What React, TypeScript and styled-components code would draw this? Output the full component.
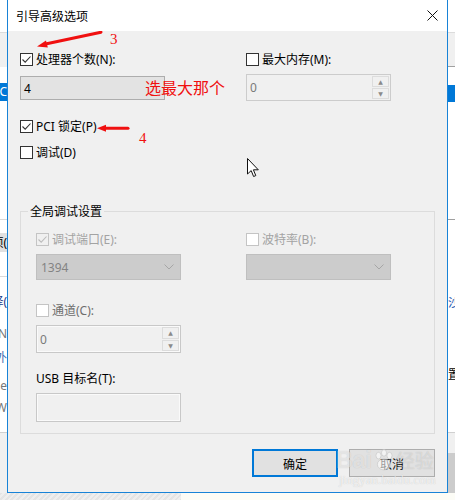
import React from "react";
import styled, { createGlobalStyle } from "styled-components";

const GlobalStyle = createGlobalStyle`
  *, *::before, *::after { box-sizing: border-box; }
  html, body { margin: 0; padding: 0; background: #ffffff; }
  body {
    font-family: "Noto Sans", "Noto Sans CJK SC", sans-serif;
    font-size: 12px;
    color: #000;
  }
`;

interface Band {
  h: number;
  bg?: string;
  line?: string;
  text?: string;
  color?: string;
}

// bits of the window behind the dialog
const leftBands: Band[] = [
  { h: 33, line: "#dcdcdc" },
  { h: 34, bg: "#f0f0f0" },
  { h: 16 },
  { h: 18, bg: "#0078d7", text: "(C", color: "#fff" },
  { h: 119, line: "#d9d9d9" },
  { h: 13 },
  { h: 19, bg: "#e1e1e1", text: "项(" },
  { h: 25, line: "#d9d9d9" },
  { h: 17 },
  { h: 15, text: "择(", color: "#1a3a8a" },
  { h: 17 },
  { h: 15, text: "N", color: "#777" },
  { h: 9 },
  { h: 15, text: "外", color: "#3a6ab0" },
  { h: 13 },
  { h: 15, text: "e", color: "#777" },
  { h: 7 },
  { h: 15, text: "W", color: "#777" },
  { h: 18, line: "#d0d0d0" },
  { h: 60, bg: "#f0f0f0" },
];

const rightBands: Band[] = [
  { h: 33, line: "#dcdcdc" },
  { h: 34, bg: "#f0f0f0", line: "#a0a0a0" },
  { h: 18 },
  { h: 17, bg: "#0078d7" },
  { h: 118, line: "#a0a0a0" },
  { h: 75 },
  { h: 15, text: "沙", color: "#2a5ab0" },
  { h: 58 },
  { h: 14, text: "置" },
  { h: 51, line: "#d0d0d0" },
  { h: 20, bg: "#f0f0f0" },
  { h: 40, bg: "#cccccc" },
];

const CheckMark = ({ color }: { color: string }) => (
  <svg width="11" height="11" viewBox="0 0 11 11">
    <path d="M1.5 5.5 L4.2 8.2 L9.5 2.5" fill="none" stroke={color} strokeWidth="1.1" />
  </svg>
);

const Check = ({
  checked,
  tone = "normal",
}: {
  checked?: boolean;
  tone?: "normal" | "dim" | "white";
}) => (
  <Box $tone={tone}>
    {checked && <CheckMark color={tone === "dim" ? "#bcbcbc" : "#333"} />}
  </Box>
);

const SpinButtons = () => (
  <SpinCol>
    <SpinBtn>▲</SpinBtn>
    <SpinBtn>▼</SpinBtn>
  </SpinCol>
);

const Chevron = () => (
  <svg width="10" height="6" viewBox="0 0 10 6">
    <path d="M0.5 0.5 L5 5 L9.5 0.5" fill="none" stroke="#a6a6a6" strokeWidth="1" />
  </svg>
);

const App: React.FC = () => {
  return (
    <>
      <GlobalStyle />
      <Screen>
        <Middle>
          <Side>
            {leftBands.map((b, i) => (
              <SideBand key={i} $h={b.h} $bg={b.bg} $line={b.line} $color={b.color} $end>
                {b.text}
              </SideBand>
            ))}
          </Side>

          <Dialog>
            <TitleBar>
              <Title>引导高级选项</Title>
              <CloseIcon width="11" height="11" viewBox="0 0 11 11">
                <path d="M0.5 0.5 L10.5 10.5 M10.5 0.5 L0.5 10.5" stroke="#111" strokeWidth="1" />
              </CloseIcon>
            </TitleBar>

            <Body>
              <TwoCol $left={226}>
                <Column $gap={10}>
                  <CheckRow>
                    <Check checked />
                    <Label>处理器个数(N):</Label>
                  </CheckRow>
                  <Field $h={24} $bg="#e3e3e3" $border="#adadad">
                    4
                  </Field>
                </Column>
                <Column $gap={8}>
                  <CheckRow>
                    <Check />
                    <Label>最大内存(M):</Label>
                  </CheckRow>
                  <Field $h={27} $bg="#f0f0f0" $border="#cccccc" $color="#7a7a7a">
                    0
                    <SpinButtons />
                  </Field>
                </Column>
              </TwoCol>

              <CheckRow $mt={19}>
                <Check checked />
                <Label>PCI 锁定(P)</Label>
              </CheckRow>
              <CheckRow $mt={13}>
                <Check />
                <Label>调试(D)</Label>
              </CheckRow>

              <Group>
                <Legend>全局调试设置</Legend>
                <TwoCol $left={210}>
                  <Column $gap={8}>
                    <CheckRow>
                      <Check checked tone="dim" />
                      <Label $dim>调试端口(E):</Label>
                    </CheckRow>
                    <Combo>
                      1394
                      <Chevron />
                    </Combo>
                  </Column>
                  <Column $gap={8}>
                    <CheckRow>
                      <Check tone="white" />
                      <Label $dim>波特率(B):</Label>
                    </CheckRow>
                    <Combo>
                      <span />
                      <Chevron />
                    </Combo>
                  </Column>
                </TwoCol>

                <CheckRow $mt={24}>
                  <Check tone="white" />
                  <Label $color="#6d6d6d">通道(C):</Label>
                </CheckRow>
                <Field $h={28} $bg="#f0f0f0" $border="#c8c8c8" $color="#7a7a7a" $mt={8} $inner>
                  0
                  <SpinButtons />
                </Field>

                <PlainLabel>USB 目标名(T):</PlainLabel>
                <Field $h={29} $bg="#f0f0f0" $border="#c8c8c8" $mt={7} $inner />
              </Group>

              <Buttons>
                <Button $primary>确定</Button>
                <Button>取消</Button>
              </Buttons>

              {/* annotations drawn on top of the screenshot */}
              <Marks width="439" height="461" viewBox="0 0 439 461">
                <path d="M37.5 13 L93 1.2" stroke="#f01010" strokeWidth="3" strokeLinecap="round" />
                <polygon points="29,15.5 39.8,16.6 38,9.4" fill="#f01010" />
                <path d="M97 97.3 L120 97.3" stroke="#f01010" strokeWidth="3" strokeLinecap="round" />
                <polygon points="89,97.3 98,93.8 98,100.8" fill="#f01010" />
              </Marks>
              <Note $x={102} $y={1}>3</Note>
              <Note $x={131} $y={100}>4</Note>
              <RedText>选最大那个</RedText>
              <Cursor width="13" height="20" viewBox="0 0 13 20">
                <path
                  d="M0.5 0.5 L0.5 16 L4.2 12.6 L6.6 18.5 L8.8 17.6 L6.4 11.8 L11.3 11.8 Z"
                  fill="#fff"
                  stroke="#111"
                  strokeWidth="1"
                  strokeLinejoin="round"
                />
              </Cursor>
              <Watermark>
                <WmTop>
                  Bai
                  <svg width="22" height="22" viewBox="0 0 20 20">
                    <g fill="rgba(255,255,255,0.6)" stroke="rgba(190,190,190,0.6)" strokeWidth="0.8">
                      <ellipse cx="5" cy="6" rx="2.3" ry="3" />
                      <ellipse cx="10" cy="3.5" rx="2.3" ry="3" />
                      <ellipse cx="15" cy="6" rx="2.3" ry="3" />
                      <ellipse cx="10" cy="14" rx="6" ry="5" />
                    </g>
                  </svg>
                  <WmCjk>经验</WmCjk>
                </WmTop>
                <WmUrl>jingyan.baidu.com</WmUrl>
              </Watermark>
            </Body>
          </Dialog>

          <Side>
            {rightBands.map((b, i) => (
              <SideBand key={i} $h={b.h} $bg={b.bg} $line={b.line} $color={b.color}>
                {b.text}
              </SideBand>
            ))}
          </Side>
        </Middle>
        <Bottom>
          <Hatch />
          <Paper />
        </Bottom>
      </Screen>
    </>
  );
};

export default App;

const Screen = styled.div`
  width: 455px;
  height: 500px;
  overflow: hidden;
  display: flex;
  flex-direction: column;
`;

const Middle = styled.div`
  display: flex;
  height: 493px;
  flex: none;
`;

const Side = styled.div`
  width: 7px;
  flex: none;
  display: flex;
  flex-direction: column;
  overflow: hidden;
  background: #fff;
`;

const SideBand = styled.div<{
  $h: number;
  $bg?: string;
  $line?: string;
  $color?: string;
  $end?: boolean;
}>`
  height: ${(p) => p.$h}px;
  flex: none;
  background: ${(p) => p.$bg || "#fff"};
  border-bottom: ${(p) => (p.$line ? `1px solid ${p.$line}` : "none")};
  color: ${(p) => p.$color || "#000"};
  display: flex;
  align-items: center;
  justify-content: ${(p) => (p.$end ? "flex-end" : "flex-start")};
  font-size: 12px;
  line-height: 14px;
  white-space: nowrap;
  overflow: hidden;
`;

const Dialog = styled.div`
  width: 441px;
  flex: none;
  display: flex;
  flex-direction: column;
  border: 1px solid #1883d7;
  border-top: none;
`;

const TitleBar = styled.div`
  height: 31px;
  flex: none;
  background: #fff;
  display: flex;
  align-items: center;
  justify-content: space-between;
  padding: 0 9px 0 8px;
`;

const Title = styled.div`
  font-family: "Noto Sans CJK SC", sans-serif;
  font-size: 12px;
  line-height: 14px;
`;

const CloseIcon = styled.svg`
  display: block;
`;

const Body = styled.div`
  flex: 1;
  position: relative;
  background: #f0f0f0;
  display: flex;
  flex-direction: column;
  padding: 22px 12px 0;
`;

const TwoCol = styled.div<{ $left: number }>`
  display: grid;
  grid-template-columns: ${(p) => p.$left}px 1fr;
  align-items: start;
`;

const Column = styled.div<{ $gap: number }>`
  display: flex;
  flex-direction: column;
  gap: ${(p) => p.$gap}px;
`;

const CheckRow = styled.div<{ $mt?: number }>`
  display: flex;
  align-items: center;
  gap: 3px;
  height: 13px;
  margin-top: ${(p) => p.$mt || 0}px;
`;

const Box = styled.span<{ $tone: "normal" | "dim" | "white" }>`
  width: 13px;
  height: 13px;
  flex: none;
  display: flex;
  align-items: center;
  justify-content: center;
  border: 1px solid ${(p) => (p.$tone === "normal" ? "#333333" : "#c4c4c4")};
  background: ${(p) => (p.$tone === "dim" ? "#f0f0f0" : "#ffffff")};
`;

const Label = styled.span<{ $dim?: boolean; $color?: string }>`
  font-size: 12px;
  line-height: 13px;
  white-space: nowrap;
  color: ${(p) => p.$color || (p.$dim ? "#a3a3a3" : "#000")};
`;

const Field = styled.div<{
  $h: number;
  $bg: string;
  $border: string;
  $color?: string;
  $mt?: number;
  $inner?: boolean;
}>`
  width: 145px;
  height: ${(p) => p.$h}px;
  margin-top: ${(p) => p.$mt || 0}px;
  background: ${(p) => p.$bg};
  border: 1px solid ${(p) => p.$border};
  box-shadow: ${(p) => (p.$inner ? "inset 0 0 0 1px #fafafa" : "none")};
  color: ${(p) => p.$color || "#000"};
  display: flex;
  align-items: center;
  justify-content: space-between;
  padding: 0 1px 0 3px;
  font-size: 12px;
`;

const SpinCol = styled.div`
  width: 17px;
  height: calc(100% - 2px);
  display: flex;
  flex-direction: column;
  gap: 1px;
`;

const SpinBtn = styled.div`
  flex: 1;
  border: 1px solid #dcdcdc;
  background: #f0f0f0;
  color: #8a8a8a;
  font-size: 6px;
  display: flex;
  align-items: center;
  justify-content: center;
  font-family: "DejaVu Sans", sans-serif;
`;

const Group = styled.div`
  position: relative;
  margin-top: 52px;
  height: 223px;
  border: 1px solid #dcdcdc;
  padding: 21px 0 0 15px;
  display: flex;
  flex-direction: column;
`;

const Legend = styled.span`
  position: absolute;
  left: 7px;
  top: -8px;
  padding: 0 2px;
  background: #f0f0f0;
  font-family: "Noto Sans CJK SC", sans-serif;
  font-size: 12px;
  line-height: 14px;
`;

const Combo = styled.div`
  width: 145px;
  height: 26px;
  background: #cccccc;
  border: 1px solid #bfbfbf;
  color: #838383;
  display: flex;
  align-items: center;
  justify-content: space-between;
  padding: 0 6px 0 4px;
  font-size: 12px;
`;

const PlainLabel = styled.div`
  margin-top: 19px;
  height: 14px;
  line-height: 14px;
  font-size: 12px;
`;

const Buttons = styled.div`
  display: flex;
  justify-content: flex-end;
  gap: 11px;
  margin-top: 15px;
`;

const Button = styled.div<{ $primary?: boolean }>`
  width: 86px;
  height: 28px;
  background: #e1e1e1;
  border: ${(p) => (p.$primary ? "2px solid #0078d7" : "1px solid #adadad")};
  display: flex;
  align-items: center;
  justify-content: center;
  font-family: "Noto Sans CJK SC", sans-serif;
  font-size: 12px;
`;

const Marks = styled.svg`
  position: absolute;
  left: 0;
  top: 0;
  pointer-events: none;
`;

const Note = styled.span<{ $x: number; $y: number }>`
  position: absolute;
  left: ${(p) => p.$x}px;
  top: ${(p) => p.$y}px;
  color: #f01010;
  font-family: "Liberation Serif", serif;
  font-size: 15px;
  line-height: 15px;
`;

const RedText = styled.span`
  position: absolute;
  left: 137px;
  top: 46px;
  color: #f01010;
  font-family: "Noto Sans CJK SC", sans-serif;
  font-size: 16px;
  line-height: 20px;
  white-space: nowrap;
`;

const Cursor = styled.svg`
  position: absolute;
  left: 239px;
  top: 127px;
`;

const Watermark = styled.div`
  position: absolute;
  left: 328px;
  top: 416px;
  display: flex;
  flex-direction: column;
  align-items: flex-start;
  pointer-events: none;
`;

const WmTop = styled.div`
  display: flex;
  align-items: center;
  gap: 1px;
  color: rgba(255, 255, 255, 0.55);
  text-shadow: 0 0 1px rgba(0, 0, 0, 0.18);
  font-family: "Liberation Sans", sans-serif;
  font-weight: bold;
  font-size: 23px;
  line-height: 26px;
`;

const WmCjk = styled.span`
  font-family: "Noto Sans CJK SC", sans-serif;
  font-weight: normal;
  font-size: 19px;
  color: rgba(255, 255, 255, 0.4);
`;

const WmUrl = styled.div`
  color: rgba(255, 255, 255, 0.7);
  text-shadow: 0 0 1px rgba(0, 0, 0, 0.2);
  font-family: "Liberation Serif", serif;
  font-size: 13px;
  line-height: 13px;
  margin-left: 3px;
`;

const Bottom = styled.div`
  display: flex;
  height: 7px;
  flex: none;
`;

const Hatch = styled.div`
  width: 181px;
  background: repeating-linear-gradient(
    135deg,
    #e4e4e4 0px,
    #e4e4e4 2px,
    #eeeeee 2px,
    #eeeeee 4px
  );
`;

const Paper = styled.div`
  flex: 1;
  background: #fcfcf6;
`;
